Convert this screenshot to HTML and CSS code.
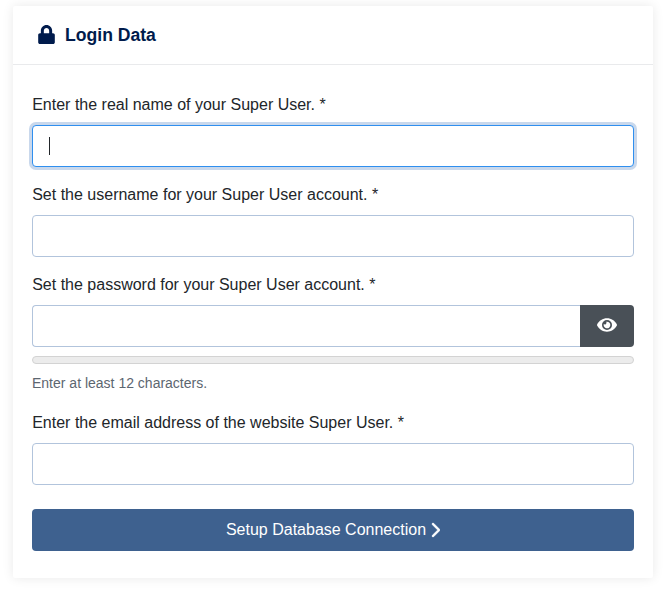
FILE: index.html
```html
<!DOCTYPE html>
<html lang="en">
<head>
<meta charset="utf-8">
<title>Login Data</title>
<link rel="stylesheet" href="styles.css">
</head>
<body>
<main class="card">
  <header class="card-header">
    <svg class="lock" viewBox="0 0 448 512" aria-hidden="true"><path d="M400 224h-24v-72C376 68.200 307.800 0 224 0S72 68.200 72 152v72H48c-26.500 0-48 21.500-48 48v192c0 26.500 21.500 48 48 48h352c26.500 0 48-21.500 48-48V272c0-26.500-21.500-48-48-48zm-104 0H152v-72c0-39.700 32.300-72 72-72s72 32.300 72 72v72z"/></svg>
    <h1 class="title">Login Data</h1>
  </header>
  <form class="card-body">
    <div class="field">
      <label class="label" for="name">Enter the real name of your Super User. *</label>
      <div class="caret-wrap">
        <input class="input input-focus" id="name" type="text">
        <span class="caret"></span>
      </div>
    </div>
    <div class="field">
      <label class="label" for="user">Set the username for your Super User account. *</label>
      <input class="input" id="user" type="text">
    </div>
    <div class="field">
      <label class="label" for="pass">Set the password for your Super User account. *</label>
      <div class="input-group">
        <input class="input input-joined" id="pass" type="password">
        <button class="eye-btn" type="button" aria-label="Show password">
          <svg class="eye" viewBox="0 0 576 512" aria-hidden="true"><path d="M572.520 241.400C518.290 135.590 410.930 64 288 64S57.680 135.640 3.480 241.410a32.350 32.350 0 0 0 0 29.190C57.710 376.410 165.070 448 288 448s230.320-71.640 284.520-177.410a32.350 32.350 0 0 0 0-29.190zM288 400a144 144 0 1 1 144-144 143.930 143.930 0 0 1-144 144zm0-240a95.310 95.310 0 0 0-25.310 3.790 47.850 47.850 0 0 1-66.900 66.900A95.780 95.780 0 1 0 288 160z"/></svg>
        </button>
      </div>
      <div class="meter"></div>
      <small class="hint">Enter at least 12 characters.</small>
    </div>
    <div class="field field-last">
      <label class="label" for="email">Enter the email address of the website Super User. *</label>
      <input class="input" id="email" type="email">
    </div>
    <button class="submit" type="button">Setup Database Connection
      <svg class="chev" viewBox="0 0 320 512" aria-hidden="true"><path d="M310.600 233.400c12.500 12.500 12.500 32.800 0 45.300l-192 192c-12.500 12.500-32.800 12.500-45.300 0s-12.500-32.800 0-45.300L242.700 256 73.400 86.600c-12.500-12.500-12.500-32.800 0-45.300s32.800-12.500 45.300 0l192 192z"/></svg>
    </button>
  </form>
</main>
</body>
</html>
```
FILE: styles.css
```css
* { box-sizing: border-box; }
html, body { margin: 0; padding: 0; background: #fff; }
body {
  padding: 6px 13px 14px;
  font-family: "Liberation Sans", Arial, sans-serif;
  font-size: 16px;
  line-height: 24px;
  color: #22262a;
}
.card {
  background: #fff;
  border-radius: 2px;
  box-shadow: 0 0 12px rgba(0, 0, 0, .09);
}
.card-header {
  display: flex;
  align-items: center;
  gap: 10px;
  height: 59px;
  padding: 0 20px 0 25px;
  border-bottom: 1px solid #e9eaec;
}
.lock { width: 17px; height: 19px; fill: #001b4c; display: block; margin-bottom: 2px; }
.title { margin: 0; font-size: 17.600px; font-weight: 700; line-height: 24px; color: #001b4c; }
.card-body { display: flex; flex-direction: column; padding: 28px 19px 27px; }
.field { display: flex; flex-direction: column; margin-bottom: 16px; }
.field-last { margin-bottom: 24px; }
.label { display: block; height: 24px; margin-bottom: 8px; padding-left: 0.2px; }
.input {
  display: block;
  width: 100%;
  height: 42px;
  padding: 0 16px;
  background: #fff;
  border: 1px solid #b2c4dc;
  border-radius: 4px;
  font: inherit;
  color: #22262a;
  outline: none;
}
.input-focus {
  border-color: #2f8fef;
  box-shadow: 0 0 0 3px #c9d8ec;
  caret-color: transparent;
}
.caret-wrap { position: relative; }
.caret {
  position: absolute;
  left: 17px;
  top: 12px;
  width: 1px;
  height: 18px;
  background: #22262a;
}
.input-group { display: flex; }
.input-joined { flex: 1; min-width: 0; border-radius: 4px 0 0 4px; border-right: 0; }
.eye-btn {
  flex: none;
  width: 54px;
  height: 42px;
  padding: 0 0 2px;
  display: flex;
  align-items: center;
  justify-content: center;
  background: #495057;
  border: 0;
  border-radius: 0 4px 4px 0;
}
.eye { width: 20px; height: 18px; fill: #fff; display: block; }
.meter {
  height: 8px;
  margin-top: 9px;
  background: #ececec;
  border: 1px solid #d3d3d3;
  border-radius: 4px;
}
.hint { display: block; margin-top: 9px; margin-bottom: 1px; font-size: 14px; line-height: 21px; color: #5c6670; }
.submit {
  display: flex;
  align-items: center;
  justify-content: center;
  gap: 4px;
  width: 100%;
  height: 42px;
  padding: 0;
  background: #3e618f;
  border: 0;
  border-radius: 4px;
  color: #fff;
  font: inherit;
}
.chev { width: 10px; height: 16px; fill: #fff; stroke: #fff; stroke-width: 14; display: block; }
```
